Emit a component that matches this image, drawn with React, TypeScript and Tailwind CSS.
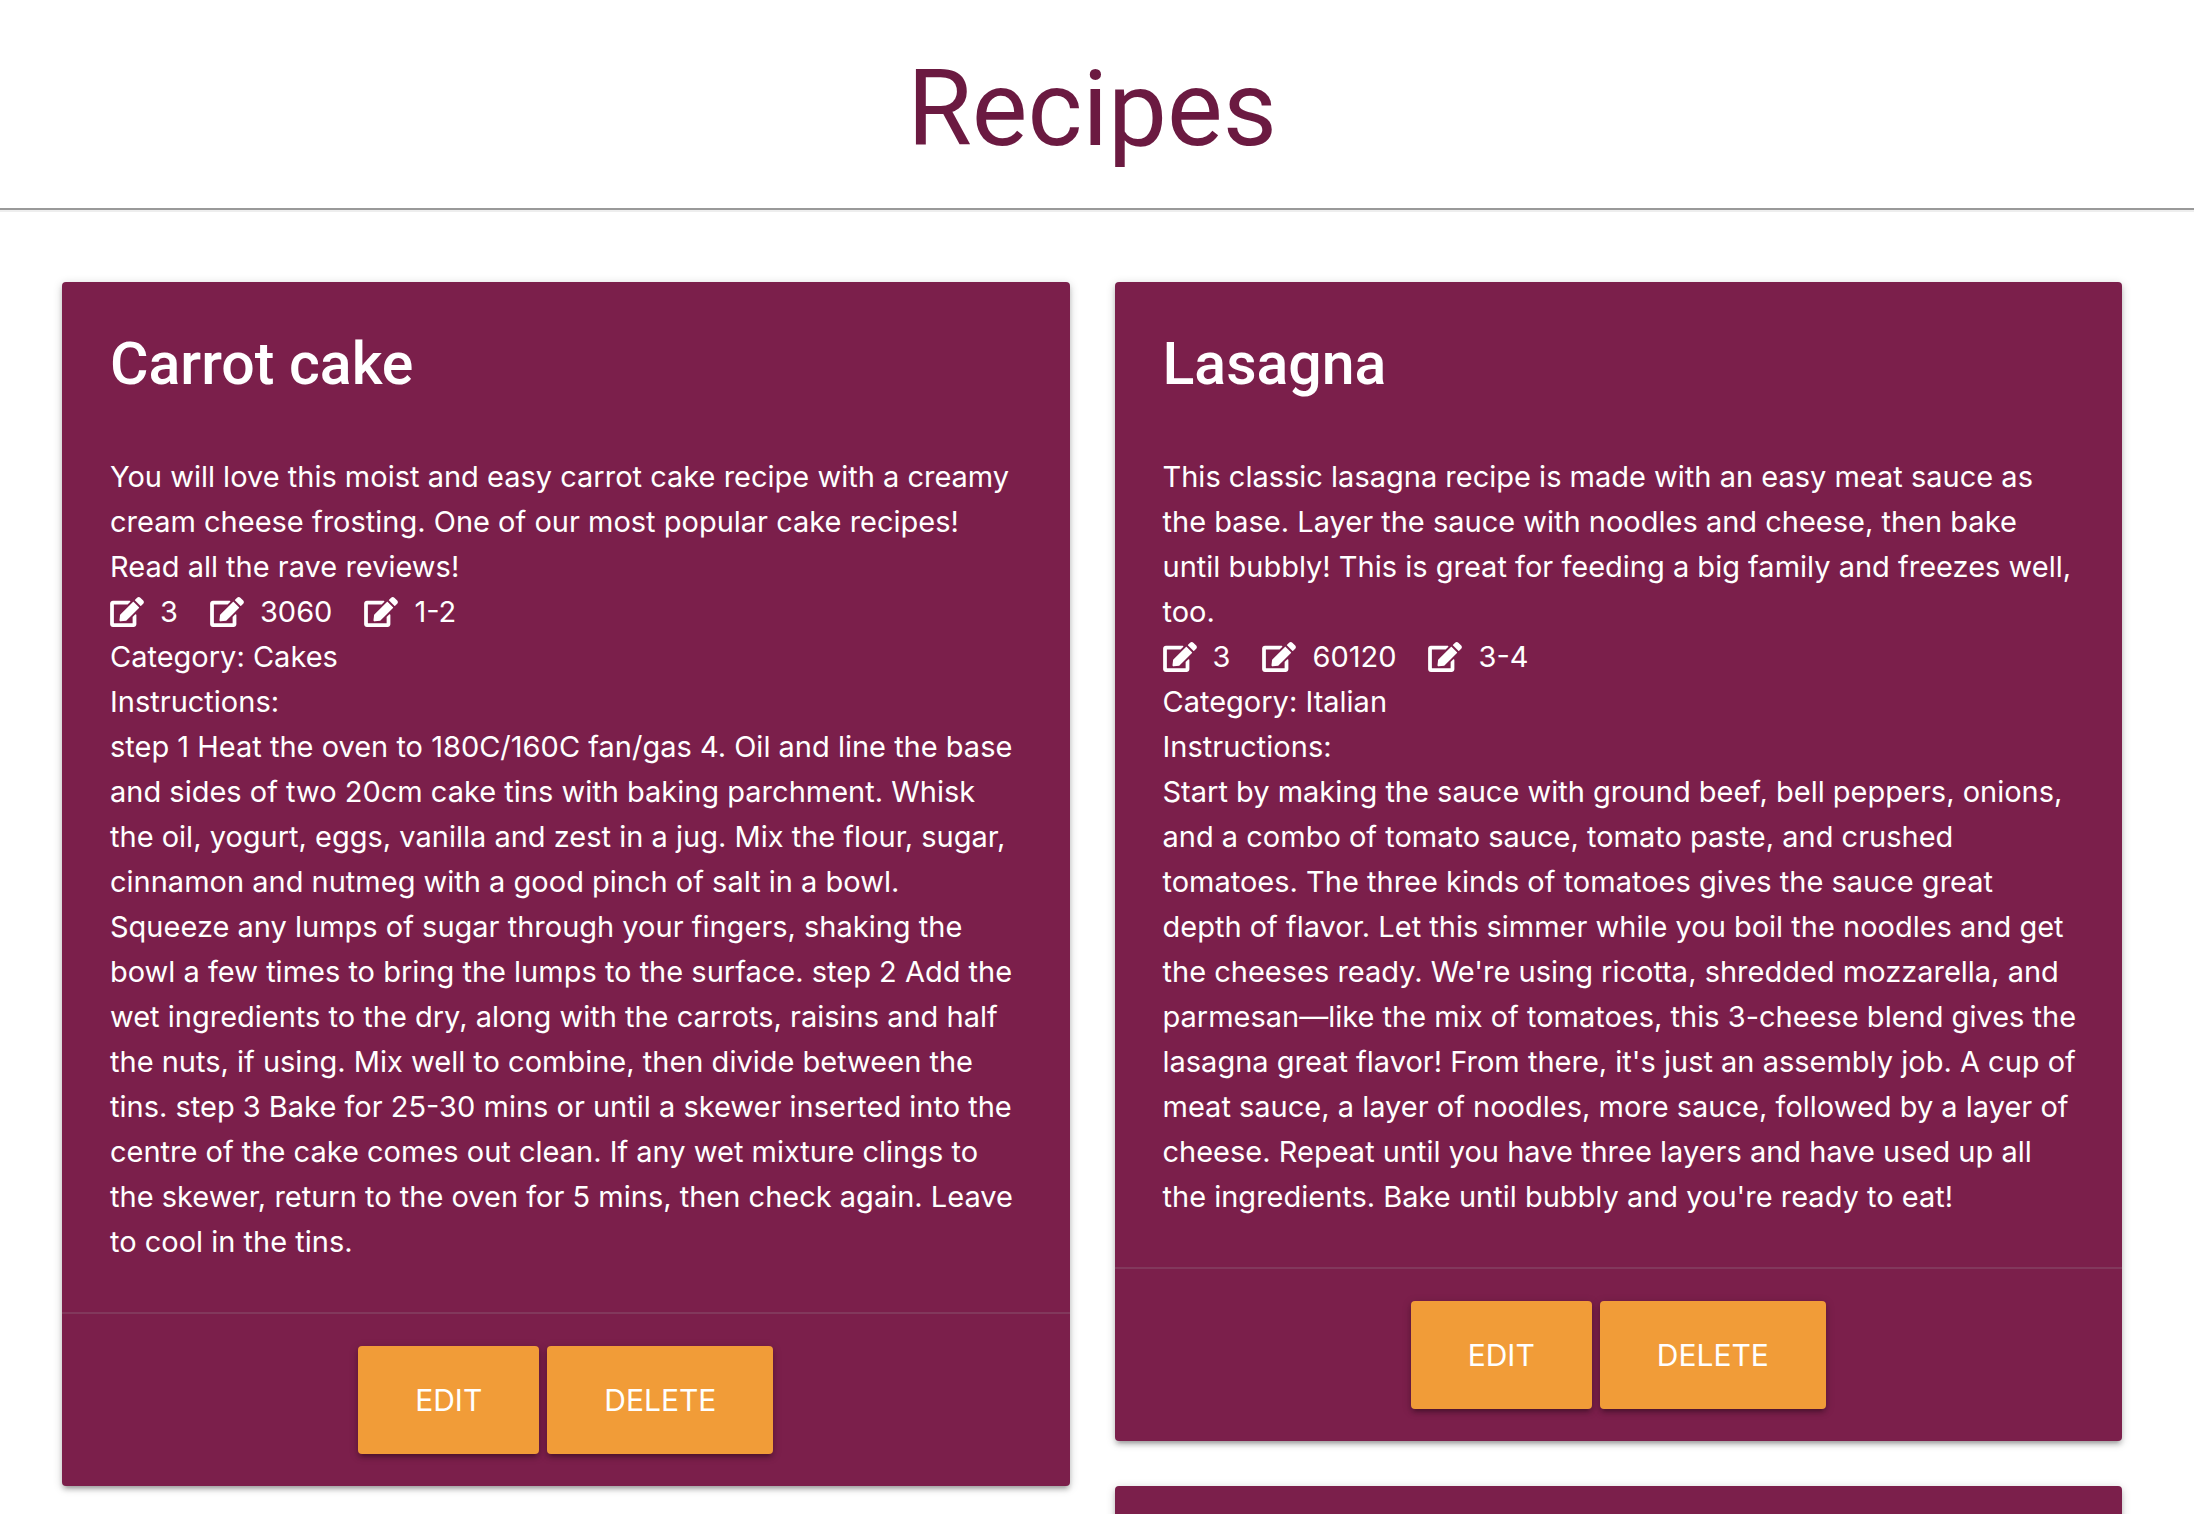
import { FaEdit } from "react-icons/fa";

type Recipe = {
  title: string;
  description: string;
  serves: string;
  minutes: string;
  difficulty: string;
  category: string;
  instructions: string;
};

const carrotCake: Recipe = {
  title: "Carrot cake",
  description:
    "You will love this moist and easy carrot cake recipe with a creamy cream cheese frosting. One of our most popular cake recipes! Read all the rave reviews!",
  serves: "3",
  minutes: "3060",
  difficulty: "1-2",
  category: "Cakes",
  instructions:
    "step 1 Heat the oven to 180C/160C fan/gas 4. Oil and line the base and sides of two 20cm cake tins with baking parchment. Whisk the oil, yogurt, eggs, vanilla and zest in a jug. Mix the flour, sugar, cinnamon and nutmeg with a good pinch of salt in a bowl. Squeeze any lumps of sugar through your fingers, shaking the bowl a few times to bring the lumps to the surface. step 2 Add the wet ingredients to the dry, along with the carrots, raisins and half the nuts, if using. Mix well to combine, then divide between the tins. step 3 Bake for 25-30 mins or until a skewer inserted into the centre of the cake comes out clean. If any wet mixture clings to the skewer, return to the oven for 5 mins, then check again. Leave to cool in the tins.",
};

const lasagna: Recipe = {
  title: "Lasagna",
  description:
    "This classic lasagna recipe is made with an easy meat sauce as the base. Layer the sauce with noodles and cheese, then bake until bubbly! This is great for feeding a big family and freezes well, too.",
  serves: "3",
  minutes: "60120",
  difficulty: "3-4",
  category: "Italian",
  instructions:
    "Start by making the sauce with ground beef, bell peppers, onions, and a combo of tomato sauce, tomato paste, and crushed tomatoes. The three kinds of tomatoes gives the sauce great depth of flavor. Let this simmer while you boil the noodles and get the cheeses ready. We're using ricotta, shredded mozzarella, and parmesan—like the mix of tomatoes, this 3-cheese blend gives the lasagna great flavor! From there, it's just an assembly job. A cup of meat sauce, a layer of noodles, more sauce, followed by a layer of cheese. Repeat until you have three layers and have used up all the ingredients. Bake until bubbly and you're ready to eat!",
};

const cardClass =
  "rounded-[4px] bg-[#7b1f4b] text-white shadow-[0_4px_4px_0_rgba(0,0,0,0.14),0_6px_2px_-4px_rgba(0,0,0,0.12),0_2px_10px_0_rgba(0,0,0,0.2)]";

function Fact({ value }: { value: string }) {
  return (
    <li className="flex items-center gap-4">
      <FaEdit className="h-[30px] w-[34px]" aria-hidden="true" />
      <span>{value}</span>
    </li>
  );
}

function ActionButton({ label }: { label: string }) {
  return (
    <button
      type="button"
      className="h-[108px] rounded-[4px] bg-[#f19c38] px-[57px] text-[30px] uppercase shadow-[0_4px_4px_0_rgba(0,0,0,0.14),0_6px_2px_-4px_rgba(0,0,0,0.12),0_2px_10px_0_rgba(0,0,0,0.2)]"
    >
      {label}
    </button>
  );
}

function RecipeCard({ recipe }: { recipe: Recipe }) {
  return (
    <article className={cardClass}>
      <div className="py-12 pr-11 pl-12 text-[29px] leading-[45px]">
        <h2 className="mb-14 font-['Roboto',sans-serif] text-[59px] font-medium leading-[68px]">
          {recipe.title}
        </h2>
        <p>{recipe.description}</p>
        <ul className="flex gap-8">
          <Fact value={recipe.serves} />
          <Fact value={recipe.minutes} />
          <Fact value={recipe.difficulty} />
        </ul>
        <p>Category: {recipe.category}</p>
        <p>Instructions:</p>
        <p>{recipe.instructions}</p>
      </div>
      <div className="flex justify-center gap-2 border-t-2 border-[#a0a0a0]/20 p-8">
        <ActionButton label="Edit" />
        <ActionButton label="Delete" />
      </div>
    </article>
  );
}

export default function App() {
  return (
    <div className="h-screen overflow-hidden bg-white font-['Inter',sans-serif]">
      <header className="border-b-2 border-[#999999] pt-11 pr-2.5 pb-8 text-center shadow-[0_2px_0_#eeeeee]">
        <h1 className="font-['Roboto',sans-serif] text-[105px] leading-[132px] text-[#6b1a41]">
          Recipes
        </h1>
      </header>
      <main className="grid grid-cols-2 items-start gap-[45px] pt-[72px] pr-[72px] pl-[62px]">
        <RecipeCard recipe={carrotCake} />
        <div className="flex flex-col gap-[45px]">
          <RecipeCard recipe={lasagna} />
          <article className={cardClass}>
            <div className="h-40" />
          </article>
        </div>
      </main>
    </div>
  );
}
